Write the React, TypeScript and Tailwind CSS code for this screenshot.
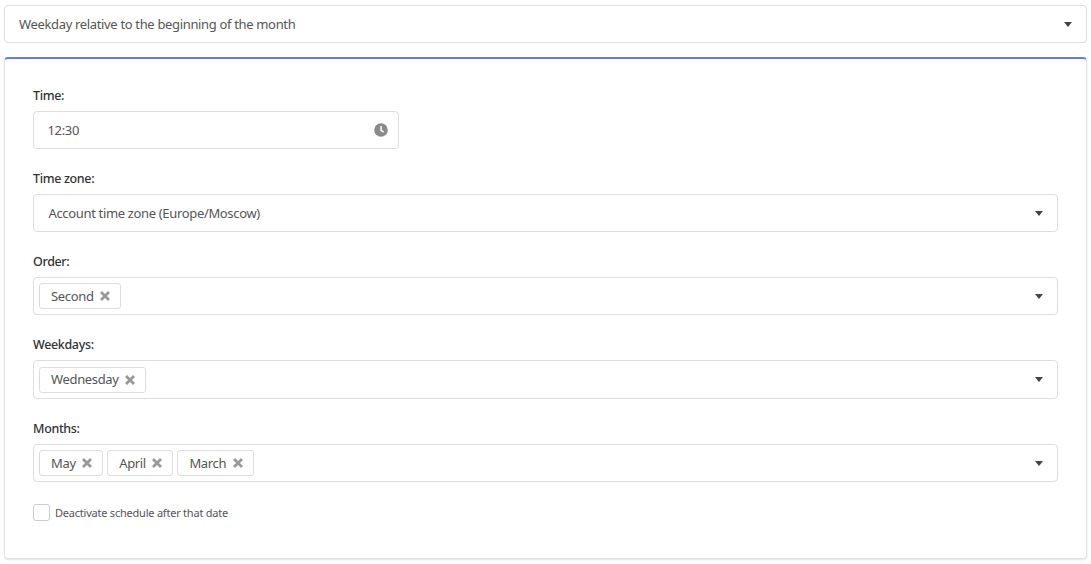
import { ReactNode } from "react";

function Caret() {
  return (
    <svg viewBox="0 0 8 5" className="h-[5px] w-2 shrink-0 fill-[#444]">
      <path d="M0 0h8L4 5z" />
    </svg>
  );
}

function Tag({ label }: { label: string }) {
  return (
    <span className="flex h-[26px] items-center gap-[6.5px] rounded-[3px] border border-[#ddd] pl-[11px] pr-[10px] text-[#555]">
      <span className="pt-px">{label}</span>
      <svg viewBox="0 0 10 10" className="h-[10px] w-[10px] fill-none stroke-[#999] stroke-[2.8]">
        <path d="M1 1l8 8M9 1L1 9" />
      </svg>
    </span>
  );
}

function Field({ label, children }: { label: string; children: ReactNode }) {
  return (
    <div className="mb-[19px]">
      <div className="mb-[6px] h-5 pt-px text-[12.5px] font-medium leading-5 tracking-[-0.35px] text-[#333]">{label}</div>
      {children}
    </div>
  );
}

function TagSelect({ tags, tall }: { tags: string[]; tall?: boolean }) {
  return (
    <div className={`flex items-center justify-between rounded-[4px] border border-[#ddd] pl-[5px] pr-[14px] ${tall ? "h-[39px]" : "h-[38px]"}`}>
      <div className="flex gap-[4px]">
        {tags.map((t) => (
          <Tag key={t} label={t} />
        ))}
      </div>
      <Caret />
    </div>
  );
}

export default function App() {
  return (
    <div className="h-[564px] w-[1091px] bg-white px-1 pt-[5px] font-['Noto_Sans',sans-serif] text-[13px] tracking-[-0.34px] text-[#555]">
      <div className="flex h-[38px] items-center justify-between rounded-[4px] border border-[#ddd] pl-[14px] pr-[14px]">
        <span className="pt-px">Weekday relative to the beginning of the month</span>
        <Caret />
      </div>

      <div className="mt-[14px] h-[502px] rounded-[4px] border border-t-2 border-[#e3e3e3] border-t-[#6a7bd6] px-[28px] pt-[26px] shadow-[0_1px_2px_rgba(0,0,0,0.12)]">
        <Field label="Time:">
          <div className="flex h-[38px] w-[366px] items-center justify-between rounded-[4px] border border-[#ddd] pl-[13.5px] pr-[10px]">
            <span className="pt-px">12:30</span>
            <svg viewBox="0 0 14 14" className="h-[14px] w-[14px]">
              <circle cx="7" cy="7" r="6.8" fill="#8a8a8a" />
              <path d="M7 3v4.4l2.6 1.6" fill="none" stroke="#fff" strokeWidth="1.5" />
            </svg>
          </div>
        </Field>
        <Field label="Time zone:">
          <div className="flex h-[38px] items-center justify-between rounded-[4px] border border-[#ddd] pl-[14.5px] pr-[14px]">
            <span className="pt-px">Account time zone (Europe/Moscow)</span>
            <Caret />
          </div>
        </Field>
        <Field label="Order:">
          <TagSelect tags={["Second"]} />
        </Field>
        <Field label="Weekdays:">
          <TagSelect tags={["Wednesday"]} tall />
        </Field>
        <Field label="Months:">
          <TagSelect tags={["May", "April", "March"]} />
        </Field>
        <label className="mt-[22px] flex items-center gap-[5px] text-[11px] tracking-[-0.22px] text-[#555]">
          <span className="h-[17px] w-[17px] rounded-[3px] border border-[#ccc]" />
          <span className="pt-px">Deactivate schedule after that date</span>
        </label>
      </div>
    </div>
  );
}
